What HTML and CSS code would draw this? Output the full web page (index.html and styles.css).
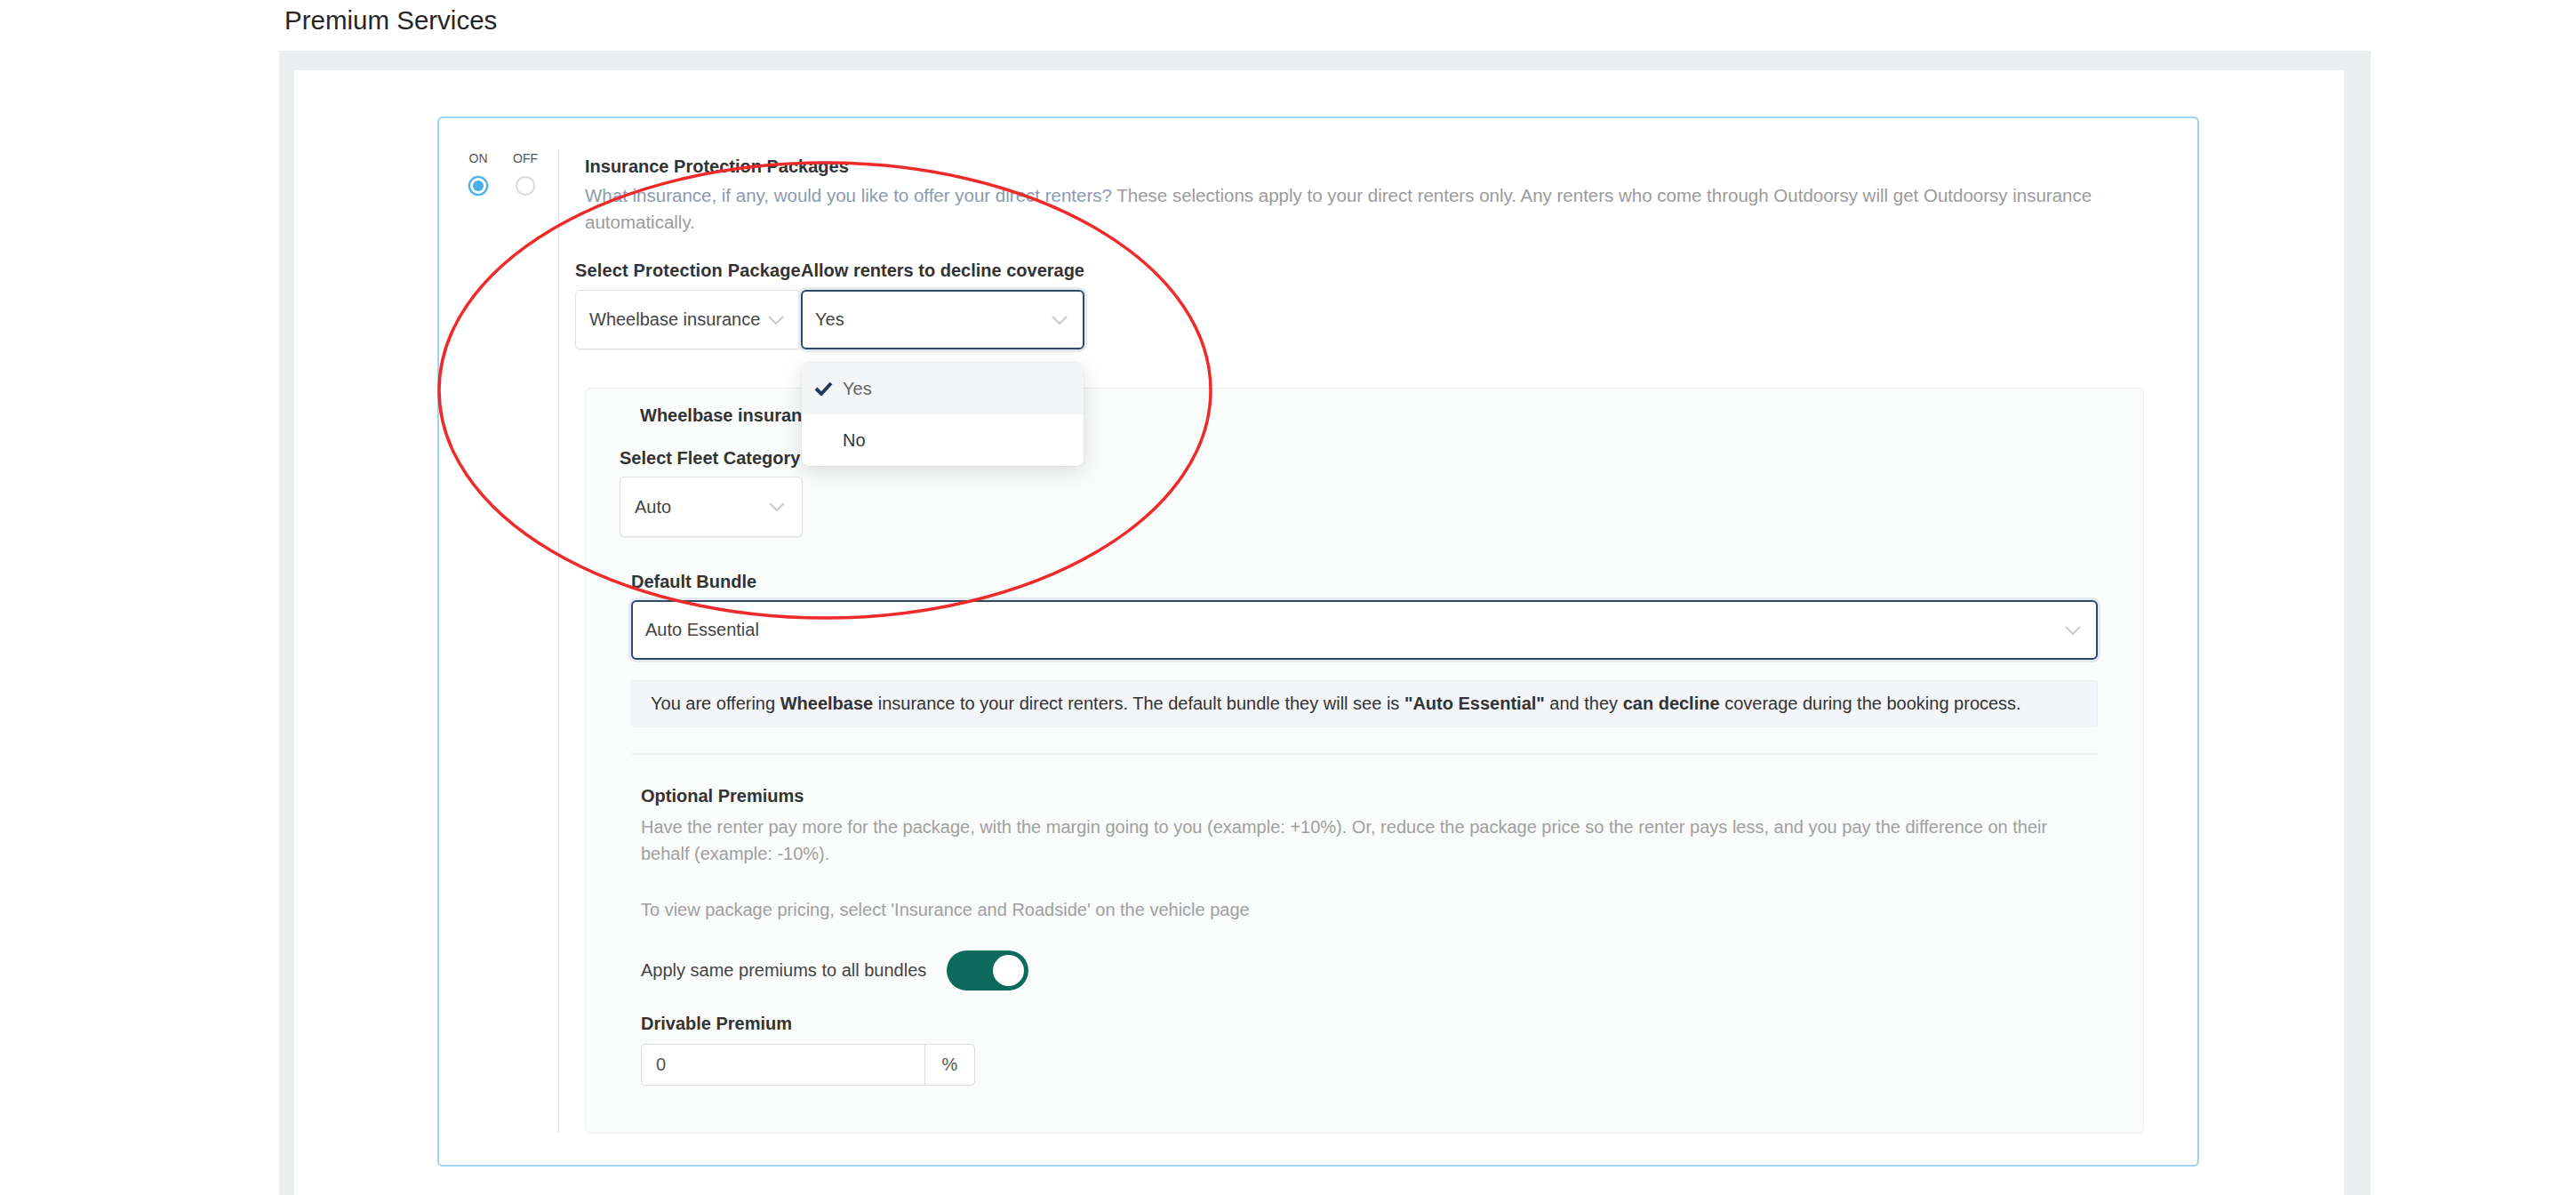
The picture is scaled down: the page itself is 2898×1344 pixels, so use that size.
FILE: index.html
```html
<!DOCTYPE html>
<html lang="en">
  <head>
    <meta charset="UTF-8" />
    <meta name="viewport" content="width=device-width, initial-scale=1.0" />
    <title>Premium Services</title>
    <link rel="stylesheet" href="styles.css">
  </head>
  <body>
    <div class="page">
      <h2 class="page-title">Premium Services</h2>
      <div class="panel">
        <div class="panel-body">
          <div class="service-card">
            <div class="switch-col">
              <label class="radio-opt">
                <span class="radio-label">ON</span>
                <span class="radio radio-checked"></span>
              </label>
              <label class="radio-opt">
                <span class="radio-label">OFF</span>
                <span class="radio"></span>
              </label>
            </div>

            <div class="service-content">
              <h3 class="service-title">Insurance Protection Packages</h3>
              <p class="service-desc">
                <span class="desc-lead">What insurance, if any, would you like to offer your direct renters?</span>
                These selections apply to your direct renters only. Any renters who come through Outdoorsy will get Outdoorsy insurance automatically.
              </p>

              <div class="select-row">
                <div class="field field-package">
                  <div class="field-label">Select Protection Package</div>
                  <div class="select">
                    <span>Wheelbase insurance</span>
                    <svg class="chevron" width="18" height="10" viewBox="0 0 18 10"><polyline points="1,1 9,9 17,1" /></svg>
                  </div>
                </div>
                <div class="field field-decline">
                  <div class="field-label">Allow renters to decline coverage</div>
                  <div class="select is-focused">
                    <span>Yes</span>
                    <svg class="chevron" width="18" height="10" viewBox="0 0 18 10"><polyline points="1,1 9,9 17,1" /></svg>
                  </div>
                  <ul class="select-menu">
                    <li class="menu-item is-selected">
                      <svg class="check" width="21" height="16" viewBox="0 0 21 16"><polyline points="2,8 8,14 19,2" /></svg>
                      Yes
                    </li>
                    <li class="menu-item">No</li>
                  </ul>
                </div>
              </div>

              <div class="package-panel">
                <div class="package-name">Wheelbase insurance</div>

                <div class="fleet-field">
                  <div class="field-label">Select Fleet Category</div>
                  <div class="select select-fleet">
                    <span>Auto</span>
                    <svg class="chevron" width="18" height="10" viewBox="0 0 18 10"><polyline points="1,1 9,9 17,1" /></svg>
                  </div>
                </div>

                <div class="bundle-block">
                  <div class="field-label">Default Bundle</div>
                  <div class="select select-bundle is-focused">
                    <span>Auto Essential</span>
                    <svg class="chevron" width="18" height="10" viewBox="0 0 18 10"><polyline points="1,1 9,9 17,1" /></svg>
                  </div>
                  <div class="info-box">
                    <span>You are offering <b>Wheelbase</b> insurance to your direct renters. The default bundle they will see is <b>"Auto Essential"</b> and they <b>can decline</b> coverage during the booking process.</span>
                  </div>
                  <hr class="divider" />
                </div>

                <div class="premiums">
                  <div class="field-label">Optional Premiums</div>
                  <p class="premiums-desc">Have the renter pay more for the package, with the margin going to you (example: +10%). Or, reduce the package price so the renter pays less, and you pay the difference on their behalf (example: -10%).</p>
                  <p class="premiums-note">To view package pricing, select 'Insurance and Roadside' on the vehicle page</p>

                  <div class="switch-row">
                    <span>Apply same premiums to all bundles</span>
                    <span class="switch is-on"><span class="switch-knob"></span></span>
                  </div>

                  <div class="field-label drivable-label">Drivable Premium</div>
                  <div class="input-group">
                    <span class="input-value">0</span>
                    <span class="input-addon">%</span>
                  </div>
                </div>
              </div>
            </div>
          </div>
        </div>
      </div>
    </div>

    <!-- red marker drawn over the coverage settings -->
    <svg class="marker" width="880" height="522" viewBox="0 0 880 522">
      <ellipse cx="438" cy="259" rx="434" ry="256" />
    </svg>
  </body>
</html>
```

FILE: styles.css
```css
/* page layout */
body {
  font-family: "Liberation Sans", Arial, Helvetica, sans-serif;
  margin: 0;
  padding: 0;
  background: #ffffff;
  color: #333;
  overflow: hidden;
  position: relative;
  height: 1344px;
}

.page {
  margin-left: 314px;
  width: 2353px;
}

.page-title {
  margin: 0;
  height: 57px;
  box-sizing: border-box;
  padding: 5px 0 0 6px;
  font-size: 29.5px;
  line-height: 36px;
  font-weight: normal;
  color: #262626;
}

.panel {
  background: #ebeff0;
  padding: 22px 30px 0 17px;
  height: 1287px;
  box-sizing: border-box;
}

.panel-body {
  background: #ffffff;
  height: 100%;
  padding-top: 52px;
  box-sizing: border-box;
}

/* service card */
.service-card {
  display: flex;
  margin: 0 163px 0 161px;
  padding: 35px 60px 35px 0;
  border: 2px solid #9dd4ef;
  border-radius: 6px;
}

.switch-col {
  display: flex;
  gap: 25px;
  padding: 2px 23px 0 30px;
}

.radio-opt {
  display: flex;
  flex-direction: column;
  align-items: center;
  width: 28px;
}

.radio-label {
  font-size: 14px;
  line-height: 16px;
  color: #555;
}

.radio {
  position: relative;
  margin-top: 12px;
  width: 22px;
  height: 22px;
  box-sizing: border-box;
  border: 2px solid #dcdcdc;
  border-radius: 50%;
  background: #fff;
}

.radio-checked {
  border-color: #4aaee8;
  box-shadow: 0 0 0 1px rgba(74, 174, 232, 0.25);
}

.radio-checked::after {
  content: "";
  position: absolute;
  top: 3px;
  left: 3px;
  width: 12px;
  height: 12px;
  border-radius: 50%;
  background: #4aaee8;
}

.service-content {
  flex: 1;
  border-left: 1px solid #dddddd;
  padding: 7px 0 0 29px;
}

.service-title {
  margin: 0;
  font-size: 20px;
  line-height: 24px;
  font-weight: bold;
  color: #333;
}

.service-desc {
  margin: 6px 0 0;
  font-size: 20.5px;
  line-height: 30px;
  color: #9b9b9b;
}

.desc-lead {
  color: #8b9ab0;
}

/* selects */
.select-row {
  display: flex;
  margin: 27px 0 0 -11px;
}

.field {
  position: relative;
}

.field-package {
  width: 254px;
}

.field-decline {
  width: 319px;
}

.field-label {
  font-size: 20px;
  line-height: 24px;
  font-weight: bold;
  color: #333;
  white-space: nowrap;
}

.field-package .field-label {
  letter-spacing: 0.15px;
}

.select {
  display: flex;
  align-items: center;
  justify-content: space-between;
  margin-top: 10px;
  height: 67px;
  padding: 0 18px 0 15px;
  box-sizing: border-box;
  background: #fff;
  border: 1px solid #e1e1e1;
  border-radius: 6px;
  box-shadow: 0 1px 2px rgba(0, 0, 0, 0.06);
  font-size: 20px;
  color: #444;
}

.select.is-focused {
  border: 2px solid #2f4867;
  padding-left: 14px;
  padding-right: 17px;
  box-shadow: 0 0 0 3px #e2eaef;
}

.chevron {
  flex: none;
}

.chevron polyline {
  fill: none;
  stroke: #cacaca;
  stroke-width: 2;
}

.select-menu {
  position: absolute;
  top: 116px;
  left: 1px;
  width: 317px;
  margin: 0;
  padding: 0;
  list-style: none;
  background: #fff;
  border-radius: 8px;
  overflow: hidden;
  box-shadow: 0 6px 22px rgba(0, 0, 0, 0.13), 0 0 0 1px rgba(0, 0, 0, 0.03);
  z-index: 5;
}

.menu-item {
  position: relative;
  height: 58px;
  display: flex;
  align-items: center;
  padding-left: 46px;
  font-size: 20px;
  color: #333;
}

.menu-item.is-selected {
  background: #f4f5f7;
  color: #666;
}

.check {
  position: absolute;
  left: 14px;
  top: 21px;
}

.check polyline {
  fill: none;
  stroke: #1f3a5c;
  stroke-width: 4;
}

/* insurance package panel */
.package-panel {
  margin-top: 43px;
  padding: 18px 0 53px;
  background: #fafbfb;
  border: 1px solid #eef0f0;
  border-radius: 6px;
}

.package-name {
  margin-left: 61px;
  font-size: 20px;
  line-height: 24px;
  font-weight: bold;
  color: #333;
}

.fleet-field {
  margin: 24px 0 0 38px;
}

.select-fleet {
  width: 206px;
  height: 68px;
  margin-top: 9px;
  padding-left: 16px;
  padding-right: 19px;
}

.bundle-block {
  margin: 38px 51px 0;
}

.select-bundle {
  margin-top: 9px;
  padding-left: 15px;
  padding-right: 28px;
}

.info-box {
  display: flex;
  align-items: center;
  margin-top: 23px;
  height: 53px;
  padding: 0 21px;
  box-sizing: border-box;
  background: #f4f5f8;
  border: 1px solid #edf0f3;
  border-radius: 4px;
  font-size: 20px;
  color: #333;
}

.divider {
  margin: 29px 0 0;
  height: 2px;
  border: none;
  background: #eef0f1;
}

.premiums {
  margin: 34px 51px 0 62px;
}

.premiums-desc {
  margin: 8px 0 0;
  font-size: 20px;
  line-height: 30px;
  color: #a0a0a0;
}

.premiums-note {
  margin: 33px 0 0;
  font-size: 20px;
  line-height: 30px;
  color: #a0a0a0;
}

.switch-row {
  display: flex;
  align-items: center;
  gap: 23px;
  margin-top: 31px;
  font-size: 20px;
  color: #444;
}

.switch {
  position: relative;
  width: 92px;
  height: 45px;
  border-radius: 23px;
  background: #c8cccc;
}

.switch.is-on {
  background: #0c6b5d;
}

.switch-knob {
  position: absolute;
  top: 5px;
  right: 5px;
  width: 35px;
  height: 35px;
  border-radius: 50%;
  background: #fff;
}

.drivable-label {
  margin-top: 25px;
}

.input-group {
  display: flex;
  margin-top: 11px;
  width: 376px;
  height: 47px;
  box-sizing: border-box;
  background: #fff;
  border: 1px solid #dcdcdc;
  border-radius: 5px;
  font-size: 20px;
  color: #555;
}

.input-value {
  flex: 1;
  display: flex;
  align-items: center;
  padding-left: 16px;
}

.input-addon {
  display: flex;
  align-items: center;
  justify-content: center;
  width: 55px;
  border-left: 1px solid #dcdcdc;
}

/* annotation ring */
.marker {
  position: absolute;
  left: 490px;
  top: 180px;
  pointer-events: none;
  z-index: 10;
}

.marker ellipse {
  fill: none;
  stroke: #ee2b2a;
  stroke-width: 3.5;
}
```
